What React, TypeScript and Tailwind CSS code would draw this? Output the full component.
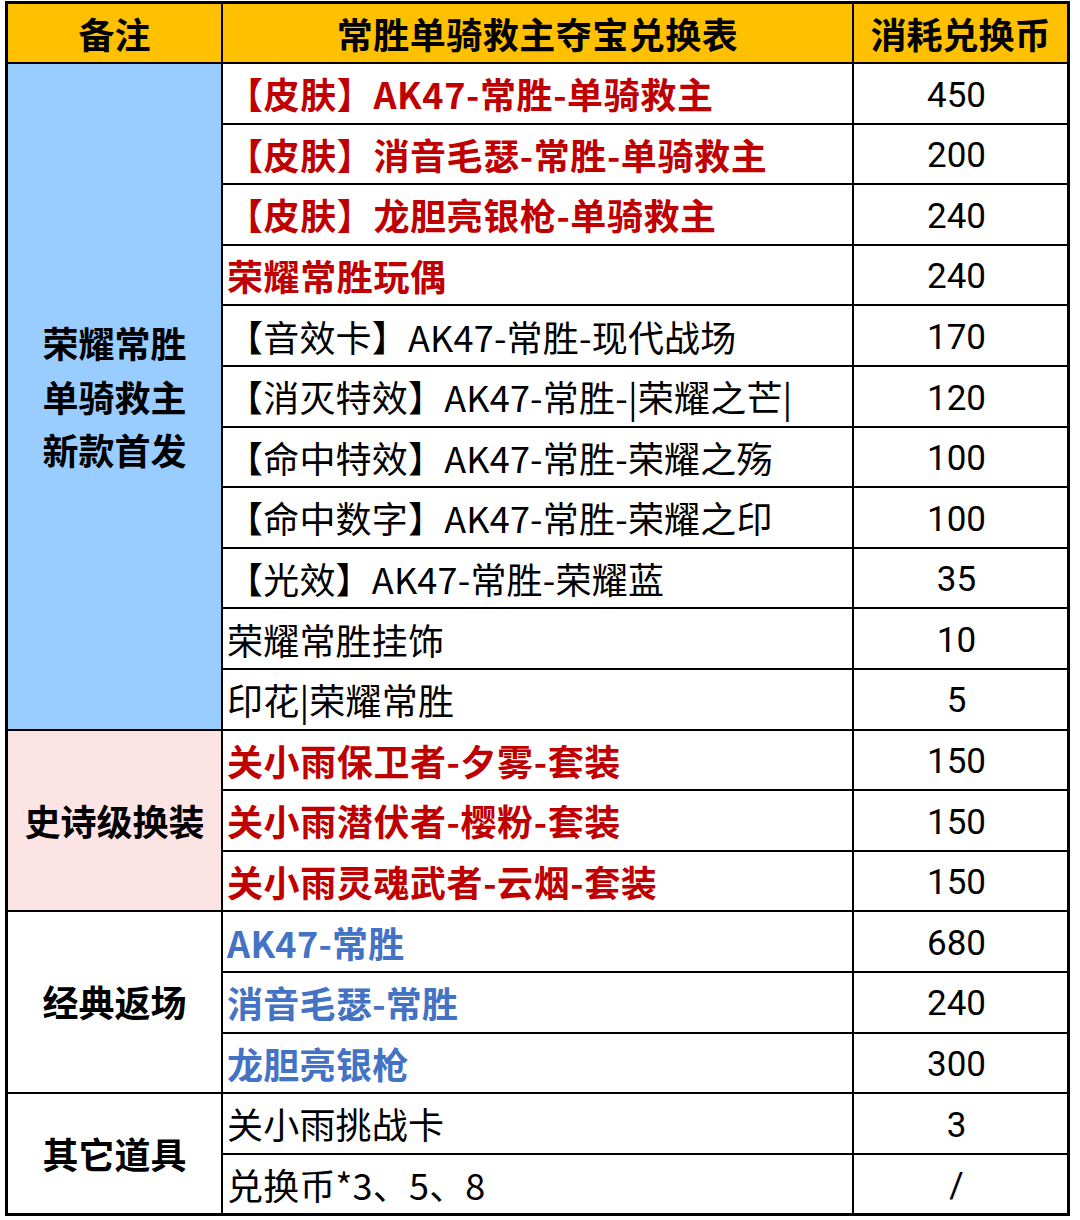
const cjk = "font-['Noto_Sans_CJK_SC',sans-serif]";
const num = "font-['Roboto','Noto_Sans_CJK_SC',sans-serif]";

type Item = { name: string; cost: string; tone?: "red" | "blue" };

const groups: { label: string[]; bg: string; span: string; items: Item[] }[] = [
  {
    label: ["荣耀常胜", "单骑救主", "新款首发"],
    bg: "bg-[#99ccff]",
    span: "row-span-11",
    items: [
      { name: "【皮肤】AK47-常胜-单骑救主", cost: "450", tone: "red" },
      { name: "【皮肤】消音毛瑟-常胜-单骑救主", cost: "200", tone: "red" },
      { name: "【皮肤】龙胆亮银枪-单骑救主", cost: "240", tone: "red" },
      { name: "荣耀常胜玩偶", cost: "240", tone: "red" },
      { name: "【音效卡】AK47-常胜-现代战场", cost: "170" },
      { name: "【消灭特效】AK47-常胜-|荣耀之芒|", cost: "120" },
      { name: "【命中特效】AK47-常胜-荣耀之殇", cost: "100" },
      { name: "【命中数字】AK47-常胜-荣耀之印", cost: "100" },
      { name: "【光效】AK47-常胜-荣耀蓝", cost: "35" },
      { name: "荣耀常胜挂饰", cost: "10" },
      { name: "印花|荣耀常胜", cost: "5" },
    ],
  },
  {
    label: ["史诗级换装"],
    bg: "bg-[#fde4e4]",
    span: "row-span-3",
    items: [
      { name: "关小雨保卫者-夕雾-套装", cost: "150", tone: "red" },
      { name: "关小雨潜伏者-樱粉-套装", cost: "150", tone: "red" },
      { name: "关小雨灵魂武者-云烟-套装", cost: "150", tone: "red" },
    ],
  },
  {
    label: ["经典返场"],
    bg: "bg-white",
    span: "row-span-3",
    items: [
      { name: "AK47-常胜", cost: "680", tone: "blue" },
      { name: "消音毛瑟-常胜", cost: "240", tone: "blue" },
      { name: "龙胆亮银枪", cost: "300", tone: "blue" },
    ],
  },
  {
    label: ["其它道具"],
    bg: "bg-white",
    span: "row-span-2",
    items: [
      { name: "关小雨挑战卡", cost: "3" },
      { name: "兑换币*3、5、8", cost: "/" },
    ],
  },
];

const toneClass = (tone?: "red" | "blue") => {
  if (tone === "red") return "text-[#c00000] font-bold tracking-[0.6px]";
  if (tone === "blue") return "text-[#4472c4] font-bold tracking-[0.3px]";
  return "text-black font-normal tracking-[0.2px]";
};

export default function App() {
  return (
    <div className="w-[1080px] h-[1220px] bg-white pt-px pl-[5px]">
      <div className="grid w-[1065px] grid-cols-[213px_629px_213px] grid-rows-[58px_repeat(19,58.6px)] gap-[2px] bg-black p-[3px]">
        {/* header */}
        <div className={`bg-[#ffc000] flex items-center justify-center text-[36px] font-bold text-black ${cjk}`}>
          备注
        </div>
        <div className={`bg-[#ffc000] flex items-center justify-center text-[36px] font-bold tracking-[0.5px] text-black ${cjk}`}>
          常胜单骑救主夺宝兑换表
        </div>
        <div className={`bg-[#ffc000] flex items-center justify-center text-[36px] font-bold text-black ${cjk}`}>
          消耗兑换币
        </div>

        {groups.map((g) => (
          <>
            <div
              key={g.label.join("")}
              className={`${g.bg} ${g.span} col-start-1 flex flex-col items-center justify-center text-[36px] leading-[53.5px] font-bold text-black ${cjk}`}
            >
              {g.label.map((l) => (
                <span key={l}>{l}</span>
              ))}
            </div>
            {g.items.map((it, i) => (
              <>
                <div
                  key={`n${i}${it.name}`}
                  className={`col-start-2 bg-white flex items-center pl-1 text-[36px] whitespace-nowrap ${toneClass(it.tone)} ${cjk}`}
                >
                  {it.name}
                </div>
                <div
                  key={`c${i}${it.name}`}
                  className={`col-start-3 bg-white flex items-center justify-center pr-2 pt-[5px] text-[35px] text-black ${num}`}
                >
                  {it.cost}
                </div>
              </>
            ))}
          </>
        ))}
      </div>
    </div>
  );
}
